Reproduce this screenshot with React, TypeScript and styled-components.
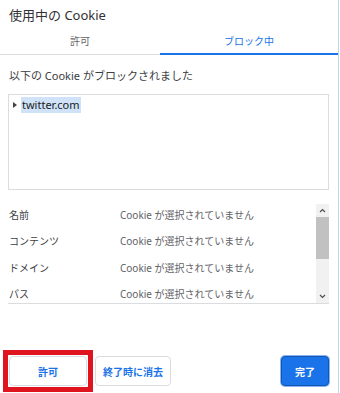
import styled, { createGlobalStyle } from "styled-components";

const Global = createGlobalStyle`
  html, body { margin: 0; padding: 0; background: #fff; }
  body {
    font-family: "Noto Sans", "Noto Sans CJK JP", sans-serif;
    color: #202124;
  }
`;

const Dialog = styled.div`
  width: 338px;
  height: 393px;
  border-right: 1px solid #b9d7ef;
  display: flex;
  flex-direction: column;
  background: #fff;
`;

const Title = styled.div`
  font-size: 13px;
  padding: 6px 9px 0;
  height: 22px;
  line-height: 18px;
  color: #303134;
`;

const Tabs = styled.div`
  display: flex;
  border-bottom: 1px solid #dadce0;
`;

const Tab = styled.div<{ $active?: boolean }>`
  flex: ${p => (p.$active ? "1" : "0 0 160px")};
  text-align: center;
  font-size: 10px;
  height: 25px;
  line-height: 26px;
  color: ${p => (p.$active ? "#1a73e8" : "#5f6368")};
  border-bottom: 2px solid ${p => (p.$active ? "#1a73e8" : "transparent")};
  margin-bottom: -1px;
`;

const Body = styled.div`
  padding: 0 9px 0 8px;
  display: flex;
  flex-direction: column;
  flex: 1;
`;

const Caption = styled.div`
  font-size: 11px;
  color: #3c4043;
  margin-top: 13px;
  line-height: 16px;
  padding-left: 1px;
`;

const TreeBox = styled.div`
  margin-top: 10px;
  height: 90px;
  border: 1px solid #dadce0;
  padding: 2px 3px;
`;

const TreeRow = styled.div`
  display: flex;
  align-items: center;
  font-size: 11px;
  height: 16px;
`;

const Arrow = styled.span`
  width: 0;
  height: 0;
  border-top: 3px solid transparent;
  border-bottom: 3px solid transparent;
  border-left: 4px solid #444;
  margin: 0 4px 0 1px;
`;

const Selected = styled.span`
  background: #cfe2f8;
  padding: 0 1px;
  line-height: 16px;
  color: #202124;
`;

const Details = styled.div`
  margin-top: 14px;
  height: 99px;
  border-bottom: 1px solid #dadce0;
  display: flex;
`;

const Rows = styled.div`
  flex: 1;
`;

const Row = styled.div`
  display: grid;
  grid-template-columns: 111px 1fr;
  font-size: 10px;
  height: 26.3px;
  line-height: 22px;
  color: #5f6368;
  padding-left: 1px;
`;

const Label = styled.span`
  color: #3c4043;
`;

const Scroll = styled.div`
  width: 13px;
  background: #f1f1f1;
  display: flex;
  flex-direction: column;
  align-items: center;
`;

const ScrollBtn = styled.div`
  height: 13px;
  display: flex;
  align-items: center;
  justify-content: center;
`;

const Thumb = styled.div`
  width: 13px;
  height: 42px;
  background: #c1c1c1;
`;

const Spacer = styled.div`
  flex: 1;
`;

const Footer = styled.div`
  display: flex;
  align-items: center;
  padding: 0 9px 0 3px;
  height: 44px;
`;

const Highlight = styled.div`
  border: 5px solid #e0141e;
  padding: 1px;
  display: flex;
`;

const Button = styled.button<{ $primary?: boolean; $w: number }>`
  width: ${p => p.$w}px;
  height: 30px;
  border-radius: 4px;
  font-family: "Noto Sans", "Noto Sans CJK JP", sans-serif;
  font-size: 10px;
  font-weight: 700;
  cursor: pointer;
  color: ${p => (p.$primary ? "#fff" : "#1a73e8")};
  background: ${p => (p.$primary ? "#1a73e8" : "#fff")};
  border: 1px solid ${p => (p.$primary ? "#1557b0" : "#dadce0")};
  box-shadow: ${p => (p.$primary ? "0 0 0 1px #8ab4f8" : "none")};
  padding: 0;
`;

const Gap = styled.div`
  width: 2px;
`;

const rows = ["名前", "コンテンツ", "ドメイン", "パス"];

function Chevron({ up }: { up?: boolean }) {
  return (
    <svg width="7" height="5" viewBox="0 0 7 5">
      <path d={up ? "M1 4 L3.5 1.5 L6 4" : "M1 1 L3.5 3.5 L6 1"} fill="none" stroke="#505050" strokeWidth="1.2" />
    </svg>
  );
}

export default function App() {
  return (
    <>
      <Global />
      <Dialog>
        <Title>使用中の Cookie</Title>
        <Tabs>
          <Tab>許可</Tab>
          <Tab $active>ブロック中</Tab>
        </Tabs>
        <Body>
          <Caption>以下の Cookie がブロックされました</Caption>
          <TreeBox>
            <TreeRow>
              <Arrow />
              <Selected>twitter.com</Selected>
            </TreeRow>
          </TreeBox>
          <Details>
            <Rows>
              {rows.map(r => (
                <Row key={r}>
                  <Label>{r}</Label>
                  <span>Cookie が選択されていません</span>
                </Row>
              ))}
            </Rows>
            <Scroll>
              <ScrollBtn><Chevron up /></ScrollBtn>
              <Thumb />
              <Spacer />
              <ScrollBtn><Chevron /></ScrollBtn>
            </Scroll>
          </Details>
          <Spacer />
        </Body>
        <Footer>
          <Highlight>
            <Button $w={78}>許可</Button>
          </Highlight>
          <Gap />
          <Button $w={76}>終了時に消去</Button>
          <Spacer />
          <Button $primary $w={48}>完了</Button>
        </Footer>
      </Dialog>
    </>
  );
}
